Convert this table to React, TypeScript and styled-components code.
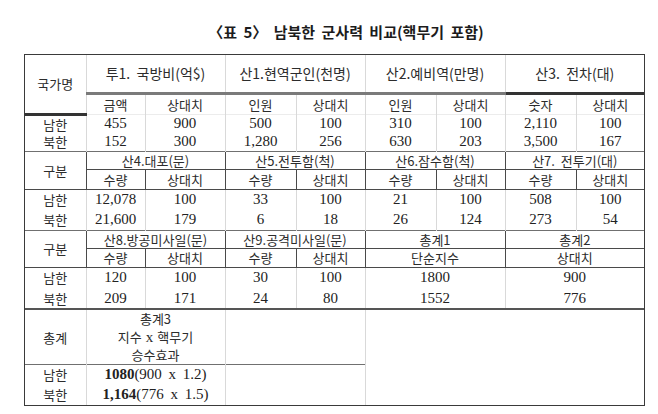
import styled, { createGlobalStyle } from 'styled-components';

const GlobalStyle = createGlobalStyle`
  body {
    margin: 0;
    background: #ffffff;
    color: #262626;
  }
`;

const LIGHT = '1px solid #d9d9d9';
const FAINT = '1px solid #ececec';
const DARK = '1px solid #4a4a4a';
const MID = '1px solid #707070';
const THICK_GRAY = '3px solid #7a7a7a';
const THICK_DARK = '3px solid #333333';
const SECTION = '2px solid #555555';

const Page = styled.div`
  padding: 24px 0 0 24px;
`;

const Title = styled.h1`
  width: 620px;
  margin: 0 0 14px;
  padding-left: 24px;
  box-sizing: border-box;
  text-align: center;
  font: 700 15px/16px "Noto Sans CJK KR", sans-serif;
  word-spacing: 3px;
  color: #1c1c1c;
`;

const Frame = styled.div`
  width: 619px;
  border: 1px solid #3a3a3a;
`;

const Grid = styled.table`
  width: 100%;
  border-collapse: collapse;
  table-layout: fixed;
`;

const Row = styled.tr<{ $h: number }>`
  height: ${(p) => p.$h}px;
`;

const Cell = styled.td<{ $l?: string; $t?: string }>`
  padding: 0;
  text-align: center;
  vertical-align: middle;
  white-space: nowrap;
  border-left: ${(p) => p.$l ?? 'none'};
  border-top: ${(p) => p.$t ?? 'none'};
  line-height: 1;
`;

const LabelCell = styled(Cell)`
  font: 400 13px/1 "Noto Sans CJK KR", sans-serif;
  color: #2c2c2c;
`;

const HeadCell = styled(Cell)<{ $big?: boolean }>`
  font: 400 ${(p) => (p.$big ? 14 : 13)}px/1 "Noto Sans CJK KR", sans-serif;
  color: #2c2c2c;
  white-space: pre;
`;

const NumCell = styled(Cell)`
  font: 400 15px/1 "Liberation Serif", "Noto Sans CJK KR", serif;
  color: #222222;
  word-spacing: 3px;
`;

const NoteCell = styled(Cell)`
  font: 400 13px/18px "Noto Sans CJK KR", sans-serif;
  color: #2c2c2c;
`;

const Latin = styled.span`
  font-family: "Liberation Serif", serif;
  font-size: 15px;
  margin: 0 4px;
`;

const Strong = styled.b`
  font-weight: 700;
  word-spacing: 0;
`;

type Line = { $l?: string; $t?: string };

const nums = (values: string[], line: Line) =>
  values.map((v, i) => (
    <NumCell key={i} $l={line.$l} $t={line.$t}>
      {v}
    </NumCell>
  ));

const heads = (values: string[], line: Line) =>
  values.map((v, i) => (
    <HeadCell key={i} $l={line.$l} $t={line.$t}>
      {v}
    </HeadCell>
  ));

export default function App() {
  return (
    <Page>
      <GlobalStyle />
      <Title>〈표 5〉 남북한 군사력 비교(핵무기 포함)</Title>
      <Frame>
        <Grid>
          <colgroup>
            <col style={{ width: 61 }} />
            <col style={{ width: 59 }} />
            <col style={{ width: 80 }} />
            <col style={{ width: 71 }} />
            <col style={{ width: 69 }} />
            <col style={{ width: 71 }} />
            <col style={{ width: 69 }} />
            <col style={{ width: 71 }} />
            <col style={{ width: 68 }} />
          </colgroup>
          <tbody>
            <Row $h={38}>
              <LabelCell rowSpan={2}>국가명</LabelCell>
              <HeadCell $big colSpan={2} $l={LIGHT}>투1.  국방비(억$)</HeadCell>
              <HeadCell $big colSpan={2} $l={LIGHT}>산1.현역군인(천명)</HeadCell>
              <HeadCell $big colSpan={2} $l={LIGHT}>산2.예비역(만명)</HeadCell>
              <HeadCell $big colSpan={2} $l={LIGHT}>산3.  전차(대)</HeadCell>
            </Row>
            <Row $h={21}>
              {heads(['금액', '상대치', '인원', '상대치', '인원', '상대치'], { $l: LIGHT, $t: THICK_GRAY })}
              {heads(['숫자', '상대치'], { $l: LIGHT, $t: THICK_DARK })}
            </Row>
            <Row $h={19}>
              <LabelCell $t={THICK_DARK}>남한</LabelCell>
              {nums(['455', '900', '500', '100', '310', '100', '2,110', '100'], { $l: LIGHT, $t: FAINT })}
            </Row>
            <Row $h={18}>
              <LabelCell>북한</LabelCell>
              {nums(['152', '300', '1,280', '256', '630', '203', '3,500', '167'], { $l: LIGHT })}
            </Row>

            <Row $h={18}>
              <LabelCell rowSpan={2} $t={MID}>구분</LabelCell>
              <HeadCell colSpan={2} $l={DARK} $t={MID}>산4.대포(문)</HeadCell>
              <HeadCell colSpan={2} $l={DARK} $t={MID}>산5.전투함(척)</HeadCell>
              <HeadCell colSpan={2} $l={DARK} $t={MID}>산6.잠수함(척)</HeadCell>
              <HeadCell colSpan={2} $l={DARK} $t={MID}>산7.  전투기(대)</HeadCell>
            </Row>
            <Row $h={20}>
              {heads(['수량', '상대치', '수량', '상대치', '수량', '상대치', '수량', '상대치'], { $l: DARK, $t: DARK })}
            </Row>
            <Row $h={21}>
              <LabelCell $t={DARK}>남한</LabelCell>
              {nums(['12,078', '100', '33', '100', '21', '100', '508', '100'], { $l: LIGHT, $t: DARK })}
            </Row>
            <Row $h={20}>
              <LabelCell>북한</LabelCell>
              {nums(['21,600', '179', '6', '18', '26', '124', '273', '54'], { $l: LIGHT })}
            </Row>

            <Row $h={18}>
              <LabelCell rowSpan={2} $t={MID}>구분</LabelCell>
              <HeadCell colSpan={2} $l={DARK} $t={MID}>산8.방공미사일(문)</HeadCell>
              <HeadCell colSpan={2} $l={DARK} $t={MID}>산9.공격미사일(문)</HeadCell>
              <HeadCell colSpan={2} $l={DARK} $t={MID}>총계1</HeadCell>
              <HeadCell colSpan={2} $l={DARK} $t={MID}>총계2</HeadCell>
            </Row>
            <Row $h={19}>
              {heads(['수량', '상대치', '수량', '상대치'], { $l: DARK, $t: DARK })}
              <HeadCell colSpan={2} $l={DARK} $t={DARK}>단순지수</HeadCell>
              <HeadCell colSpan={2} $l={DARK} $t={DARK}>상대치</HeadCell>
            </Row>
            <Row $h={21}>
              <LabelCell $t={DARK}>남한</LabelCell>
              {nums(['120', '100', '30', '100'], { $l: LIGHT, $t: DARK })}
              <NumCell colSpan={2} $l={LIGHT} $t={DARK}>1800</NumCell>
              <NumCell colSpan={2} $l={LIGHT} $t={DARK}>900</NumCell>
            </Row>
            <Row $h={21}>
              <LabelCell>북한</LabelCell>
              {nums(['209', '171', '24', '80'], { $l: LIGHT })}
              <NumCell colSpan={2} $l={LIGHT}>1552</NumCell>
              <NumCell colSpan={2} $l={LIGHT}>776</NumCell>
            </Row>

            <Row $h={52}>
              <LabelCell $t={SECTION}>총계</LabelCell>
              <NoteCell colSpan={2} $l={LIGHT} $t={SECTION}>
                총계3
                <br />
                지수<Latin>x</Latin>핵무기
                <br />
                승수효과
              </NoteCell>
              <Cell colSpan={2} $l={LIGHT} $t={SECTION} />
              <Cell colSpan={4} rowSpan={3} $l={LIGHT} $t={SECTION} />
            </Row>
            <Row $h={20}>
              <LabelCell $t={MID}>남한</LabelCell>
              <NumCell colSpan={2} $l={LIGHT} $t={MID}>
                <Strong>1080</Strong>(900 x 1.2)
              </NumCell>
              <Cell colSpan={2} rowSpan={2} $l={LIGHT} $t={MID} />
            </Row>
            <Row $h={20}>
              <LabelCell>북한</LabelCell>
              <NumCell colSpan={2} $l={LIGHT}>
                <Strong>1,164</Strong>(776 x 1.5)
              </NumCell>
            </Row>
          </tbody>
        </Grid>
      </Frame>
    </Page>
  );
}
